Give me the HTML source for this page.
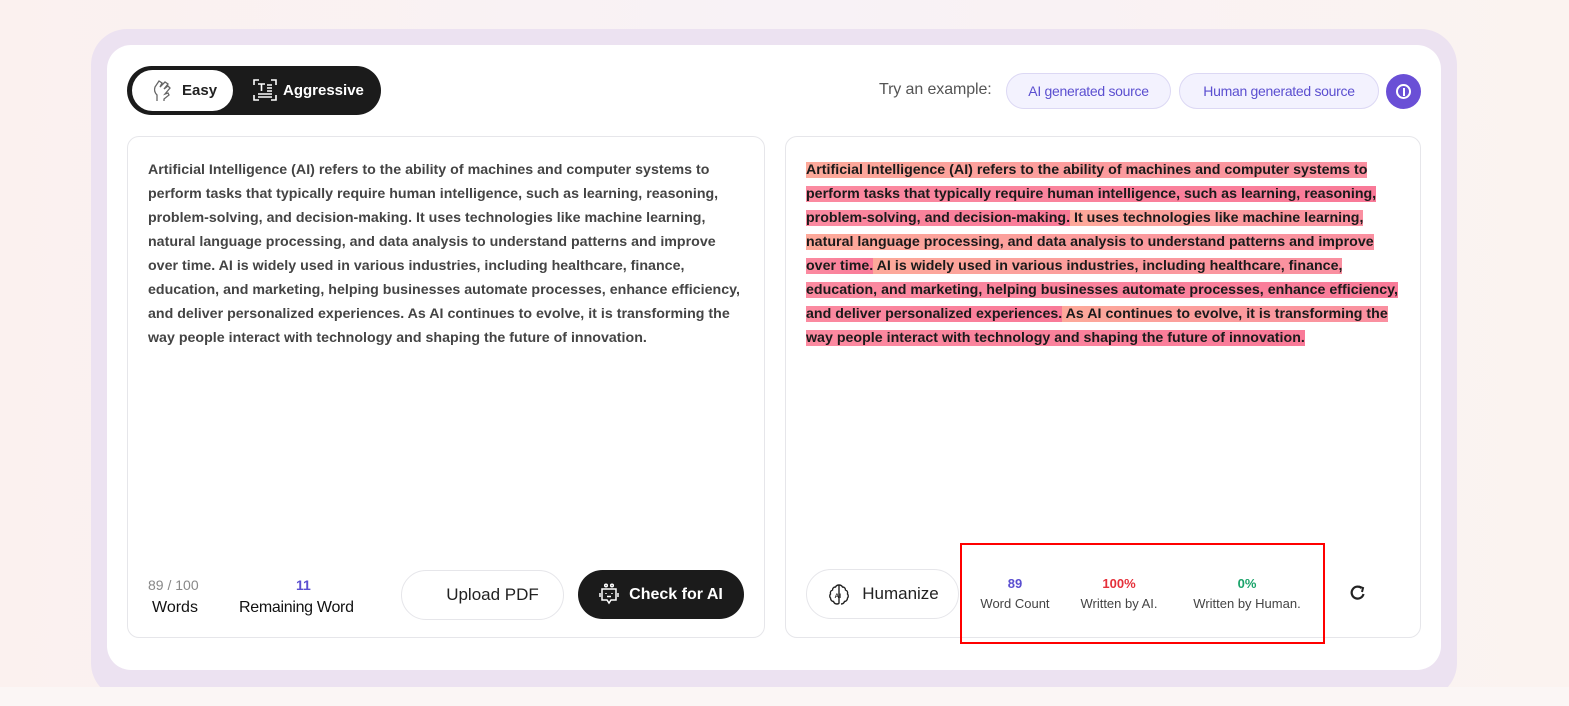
<!DOCTYPE html>
<html><head><meta charset="utf-8"><style>
*{box-sizing:border-box;margin:0;padding:0}
body{width:1569px;height:706px;overflow:hidden;background:linear-gradient(90deg,#fbf1ef,#f8f2f6 50%,#fbf3f0);font-family:"Liberation Sans",sans-serif;position:relative}
.bottom{position:absolute;left:0;top:687px;width:1569px;height:19px;background:#fbf6f5}
.frame{position:absolute;left:91px;top:29px;width:1366px;height:670px;border-radius:36px;background:#ece2f1}
.card{position:absolute;left:107px;top:45px;width:1334px;height:625px;border-radius:24px;background:#fff}
.toggle{position:absolute;left:127px;top:66px;width:254px;height:49px;border-radius:25px;background:#1b1b1b}
.easy{position:absolute;left:5px;top:4px;width:101px;height:41px;border-radius:21px;background:#fff;font-weight:bold;font-size:15px;color:#222;line-height:41px;padding-left:50px}
.agg{position:absolute;left:156px;top:0;line-height:49px;color:#fff;font-weight:bold;font-size:15px}
.panel{position:absolute;top:136px;height:502px;border:1px solid #e6e6ea;border-radius:12px;background:#fff}
.txt{position:absolute;left:20px;top:21px;font-size:14.2px;line-height:24px;color:#444;font-weight:bold;letter-spacing:0.02px;white-space:nowrap}
.hl{color:#1a1a1a}
.a{background:linear-gradient(90deg,#fda99a,#fa8fa0)}
.b{background:linear-gradient(90deg,#fb8aa0,#f97a98)}
.pill{position:absolute;height:36px;top:73px;border-radius:18px;background:#f3f2fe;border:1px solid #dcd8f4;color:#5b4fd0;font-size:14px;line-height:34px;text-align:center;letter-spacing:-0.3px}
.btn{position:absolute;border-radius:25px;font-size:16px;font-weight:bold;text-align:center}
.stat{position:absolute;text-align:center;font-size:13px;color:#444}
.stat b{display:block;font-size:13px;margin-bottom:5px}
</style></head><body>
<div class="frame"></div>
<div class="bottom"></div>
<div class="card"></div>
<div class="toggle">
 <div class="easy"><svg style="position:absolute;left:20px;top:9px" width="22" height="24" viewBox="0 0 22 24" fill="none" stroke="#666" stroke-width="1.3"><path d="M5 22v-6c-2-2-3-5-2-8l4-6 3 2-2 4 5-5 3 2-4 5 4-3 2 2-5 6 3-1 1 2-5 4v2"/></svg>Easy</div>
 <div class="agg"><svg style="position:absolute;left:-30px;top:13px" width="24" height="22" viewBox="0 0 24 22" fill="none" stroke="#fff" stroke-width="1.6"><path d="M1 6V1h5M18 1h5v5M1 16v5h5M18 21h5v-5M5 5h7M8.5 5v7M14 6h5M14 9h5M14 12h5M5 15h14M5 18h14"/></svg>Aggressive</div>
</div>
<div style="position:absolute;left:879px;top:81px;font-size:16px;color:#555;letter-spacing:-0.1px">Try an example:</div>
<div class="pill" style="left:1006px;width:165px">AI generated source</div>
<div class="pill" style="left:1179px;width:200px">Human generated source</div>
<div style="position:absolute;left:1386px;top:74px;width:35px;height:35px;border-radius:50%;background:#6a4fd6"><div style="position:absolute;left:10px;top:10px;width:15px;height:15px;border-radius:50%;border:2px solid #fff"></div><div style="position:absolute;left:16.5px;top:14px;width:2px;height:8px;background:#fff"></div></div>

<div class="panel" style="left:127px;width:638px">
 <div class="txt">Artificial Intelligence (AI) refers to the ability of machines and computer systems to<br>perform tasks that typically require human intelligence, such as learning, reasoning,<br>problem-solving, and decision-making. It uses technologies like machine learning,<br>natural language processing, and data analysis to understand patterns and improve<br>over time. AI is widely used in various industries, including healthcare, finance,<br>education, and marketing, helping businesses automate processes, enhance efficiency,<br>and deliver personalized experiences. As AI continues to evolve, it is transforming the<br>way people interact with technology and shaping the future of innovation.</div>
 <div style="position:absolute;left:20px;top:440px;font-size:14px;color:#888">89 / 100</div>
 <div style="position:absolute;left:24px;top:462px;font-size:16px;color:#111">Words</div>
 <div style="position:absolute;left:168px;top:440px;font-size:14px;color:#5b4fd0;font-weight:bold">11</div>
 <div style="position:absolute;left:111px;top:462px;font-size:16px;color:#111;letter-spacing:-0.3px">Remaining Word</div>
 <div class="btn" style="left:273px;top:433px;width:163px;height:50px;border:1px solid #e6e6ea;line-height:48px;color:#222;padding-left:20px;font-weight:normal;font-size:17px">Upload PDF</div>
 <div class="btn" style="left:450px;top:433px;width:166px;height:49px;background:#1b1b1b;color:#fff;line-height:49px;padding-left:30px"><svg style="position:absolute;left:20px;top:13px" width="22" height="24" viewBox="0 0 22 24" fill="none" stroke="#fff" stroke-width="1.5"><circle cx="8" cy="2.5" r="1.3"/><circle cx="14" cy="2.5" r="1.3"/><path d="M4 6h14v11h-5l-2 3-2-3H4z M2 10v4M20 10v4M8 10v1M14 10v1M9 13.5h4"/></svg>Check for AI</div>
</div>

<div class="panel" style="left:785px;width:636px">
 <div class="txt hl"><span class="a">Artificial Intelligence (AI) refers to the ability of machines and computer systems to</span><br><span class="b">perform tasks that typically require human intelligence, such as learning, reasoning,</span><br><span class="b">problem-solving, and decision-making.</span><span class="a"> It uses technologies like machine learning,</span><br><span class="a">natural language processing, and data analysis to understand patterns and improve</span><br><span class="b">over time.</span><span class="a"> AI is widely used in various industries, including healthcare, finance,</span><br><span class="b">education, and marketing, helping businesses automate processes, enhance efficiency,</span><br><span class="b">and deliver personalized experiences.</span><span class="a"> As AI continues to evolve, it is transforming the</span><br><span class="b">way people interact with technology and shaping the future of innovation.</span></div>
 <div class="btn" style="left:20px;top:432px;width:153px;height:50px;border:1px solid #e6e6ea;line-height:48px;color:#222;padding-left:36px;font-weight:normal;font-size:17px"><svg style="position:absolute;left:20px;top:13px" width="24" height="24" viewBox="0 0 24 24" fill="none" stroke="#222" stroke-width="1.4"><path d="M12 2c-2 0-3 1-3.5 2-2 0-3 1.5-3 3-1.5.5-2.5 2-2 4-1 1-1 3 0 4 0 2 1.5 3.5 3 3.5.5 1.5 2 2.5 3.5 2.5 1 0 2-.5 2-1V2zM12 2c2 0 3 1 3.5 2 2 0 3 1.5 3 3 1.5.5 2.5 2 2 4 1 1 1 3 0 4 0 2-1.5 3.5-3 3.5-.5 1.5-2 2.5-3.5 2.5"/><text x="7.5" y="15" font-size="6.5" font-family="Liberation Sans" font-weight="bold" fill="#222" stroke="none">AI</text></svg>Humanize</div>
 <div class="stat" style="left:186px;top:439px;width:86px"><b style="color:#5b4fd0">89</b>Word Count</div>
 <div class="stat" style="left:287px;top:439px;width:92px"><b style="color:#e5303a">100%</b>Written by AI.</div>
 <div class="stat" style="left:396px;top:439px;width:130px"><b style="color:#1aa36a">0%</b>Written by Human.</div>
 <svg style="position:absolute;left:563px;top:447px" width="18" height="18" viewBox="0 0 18 18" fill="none" stroke="#222" stroke-width="2.2"><path d="M14.5 10A6 6 0 1 1 12.5 4"/><path d="M10 2.5l4 1.5-1 4" stroke-width="2"/></svg>
</div>
<div style="position:absolute;left:960px;top:543px;width:365px;height:101px;border:2px solid #f00"></div>
</body></html>
